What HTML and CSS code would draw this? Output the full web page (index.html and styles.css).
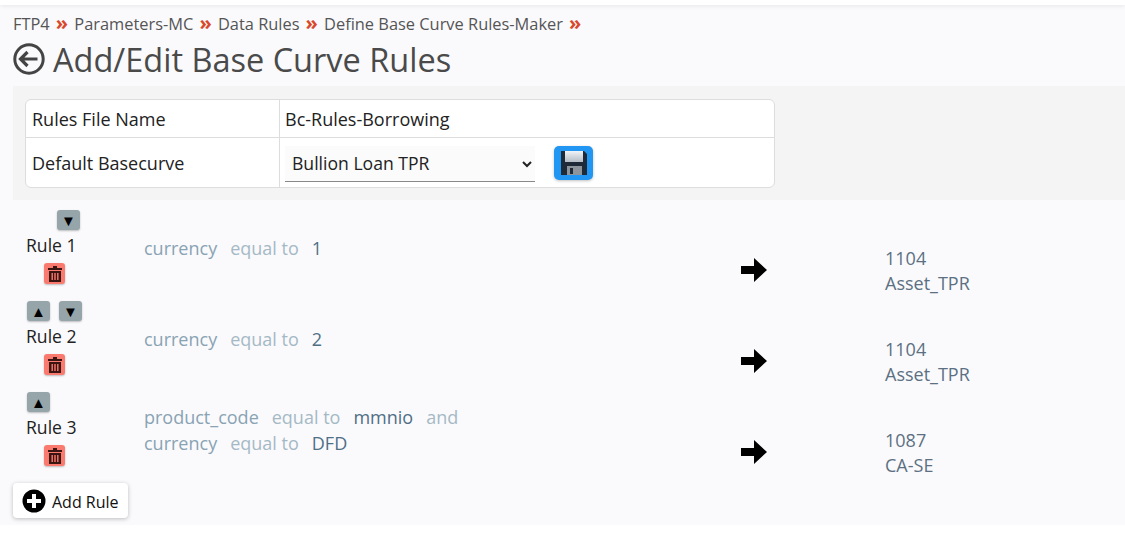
FILE: index.html
```html
<!DOCTYPE html>
<html lang="en">
<head>
    <meta charset="UTF-8">
    <title>Add/Edit Base Curve Rules</title>
    <link rel="stylesheet" href="styles.css">
</head>
<body>
    <div class="top-strip"></div>
    <div class="page">
        <div class="breadcrumb">
            <span>FTP4</span><b>»</b>
            <span>Parameters-MC</span><b>»</b>
            <span>Data Rules</span><b>»</b>
            <span>Define Base Curve Rules-Maker</span><b>»</b>
        </div>

        <div class="title-row">
            <svg class="back-icon" viewBox="0 0 32 32" width="32" height="32">
                <circle cx="16" cy="16" r="14.2" fill="none" stroke="#444" stroke-width="3"/>
                <path d="M7.5 16h17M14.5 9l-7 7 7 7" fill="none" stroke="#444" stroke-width="3.2"/>
            </svg>
            <h1>Add/Edit Base Curve Rules</h1>
        </div>

        <div class="file-panel">
            <div class="file-table">
                <div class="file-row">
                    <div class="file-label">Rules File Name</div>
                    <div class="file-value">Bc-Rules-Borrowing</div>
                </div>
                <div class="file-row">
                    <div class="file-label">Default Basecurve</div>
                    <div class="file-value">
                        <select class="curve-select">
                            <option>Bullion Loan TPR</option>
                        </select>
                        <button class="save-button" aria-label="Save">
                            <svg viewBox="0 0 28 26" width="28" height="26">
                                <defs>
                                    <linearGradient id="saveLabel" x1="0" y1="0" x2="0" y2="1">
                                        <stop offset="0" stop-color="#f2f4f7"/>
                                        <stop offset="1" stop-color="#b4bcc6"/>
                                    </linearGradient>
                                </defs>
                                <path d="M1 1h23l3 3v21H1z" fill="#1f2a38"/>
                                <rect x="5" y="1" width="18" height="11" fill="url(#saveLabel)"/>
                                <rect x="7" y="16" width="15" height="9" fill="#8d949c"/>
                                <rect x="10" y="18" width="3" height="6" fill="#1f2a38"/>
                            </svg>
                        </button>
                    </div>
                </div>
            </div>
        </div>

        <div class="rules">
            <div class="rule">
                <div class="rule-side">
                    <div class="moves only-down">
                        <button class="move-button">▼</button>
                    </div>
                    <div class="rule-name">Rule 1</div>
                    <button class="trash-button" aria-label="Delete">
                        <svg viewBox="0 0 14 16" width="14" height="16"><path d="M5 0h4v2h5v2H0V2h5zM1 5h12v11H1zM3.5 7v7h1.4V7zM6.3 7v7h1.4V7zM9.100 7v7h1.400V7z" fill="#3a1512" fill-rule="evenodd"/></svg>
                    </button>
                </div>
                <div class="rule-cond">
                    <div><span class="field">currency</span><span class="op">equal to</span><span class="val">1</span></div>
                </div>
                <div class="rule-target">
                    <svg class="arrow-icon" viewBox="0 0 26 24" width="26" height="24"><path d="M0 8h13V0l13 12-13 12v-8H0z" fill="#000"/></svg>
                    <div class="target-text">1104<br>Asset_TPR</div>
                </div>
            </div>

            <div class="rule">
                <div class="rule-side">
                    <div class="moves">
                        <button class="move-button">▲</button>
                        <button class="move-button">▼</button>
                    </div>
                    <div class="rule-name">Rule 2</div>
                    <button class="trash-button" aria-label="Delete">
                        <svg viewBox="0 0 14 16" width="14" height="16"><path d="M5 0h4v2h5v2H0V2h5zM1 5h12v11H1zM3.5 7v7h1.4V7zM6.3 7v7h1.4V7zM9.100 7v7h1.400V7z" fill="#3a1512" fill-rule="evenodd"/></svg>
                    </button>
                </div>
                <div class="rule-cond">
                    <div><span class="field">currency</span><span class="op">equal to</span><span class="val">2</span></div>
                </div>
                <div class="rule-target">
                    <svg class="arrow-icon" viewBox="0 0 26 24" width="26" height="24"><path d="M0 8h13V0l13 12-13 12v-8H0z" fill="#000"/></svg>
                    <div class="target-text">1104<br>Asset_TPR</div>
                </div>
            </div>

            <div class="rule">
                <div class="rule-side">
                    <div class="moves">
                        <button class="move-button">▲</button>
                    </div>
                    <div class="rule-name">Rule 3</div>
                    <button class="trash-button" aria-label="Delete">
                        <svg viewBox="0 0 14 16" width="14" height="16"><path d="M5 0h4v2h5v2H0V2h5zM1 5h12v11H1zM3.5 7v7h1.4V7zM6.3 7v7h1.4V7zM9.100 7v7h1.400V7z" fill="#3a1512" fill-rule="evenodd"/></svg>
                    </button>
                </div>
                <div class="rule-cond">
                    <div><span class="field">product_code</span><span class="op">equal to</span><span class="val">mmnio</span><span class="op">and</span></div>
                    <div><span class="field">currency</span><span class="op">equal to</span><span class="val">DFD</span></div>
                </div>
                <div class="rule-target">
                    <svg class="arrow-icon" viewBox="0 0 26 24" width="26" height="24"><path d="M0 8h13V0l13 12-13 12v-8H0z" fill="#000"/></svg>
                    <div class="target-text">1087<br>CA-SE</div>
                </div>
            </div>
        </div>

        <button class="add-button">
            <svg viewBox="0 0 24 24" width="24" height="24">
                <circle cx="12" cy="12" r="11.500" fill="#000"/>
                <path d="M10 5h4v5h5v4h-5v5h-4v-5H5v-4h5z" fill="#fff"/>
            </svg>
            <span class="add-label">Add Rule</span>
        </button>
    </div>
</body>
</html>
```

FILE: styles.css
```css
* {
    box-sizing: border-box;
}
body {
    margin: 0;
    background-color: #fff;
    font-family: "Open Sans", "Liberation Sans", sans-serif;
    font-size: 18px;
    color: #222;
    overflow: hidden;
}
button {
    font-family: inherit;
    border: none;
    cursor: pointer;
}
.top-strip {
    height: 5px;
    background-color: #fff;
    box-shadow: 0 1px 4px rgba(0, 0, 0, 0.08);
    position: relative;
}
.page {
    height: 520px;
    padding: 6px 0 0 13px;
    background-color: #fafafd;
}
.breadcrumb {
    height: 24px;
    font-size: 16.4px;
    line-height: 24px;
    color: #555;
    white-space: nowrap;
}
.breadcrumb b {
    margin: 0 2px 0 6px;
    color: #d9482b;
    font-size: 20px;
}
.title-row {
    display: flex;
    align-items: center;
    gap: 8px;
    height: 44px;
    margin-top: 2px;
}
.title-row h1 {
    margin: 0;
    font-size: 32.5px;
    font-weight: 400;
    color: #4a4a4a;
}
.file-panel {
    margin-top: 5px;
    padding: 13px 12px 12px;
    height: 114px;
    background-color: #f4f4f4;
}
.file-table {
    width: 750px;
    height: 89px;
    background-color: #fff;
    border: 1px solid #ddd;
    border-radius: 6px;
}
.file-row {
    display: flex;
    height: 38px;
    border-bottom: 1px solid #ddd;
}
.file-row:last-child {
    height: 49px;
    border-bottom: none;
}
.file-label {
    display: flex;
    align-items: center;
    width: 254px;
    padding-left: 6px;
    border-right: 1px solid #ddd;
}
.file-value {
    display: flex;
    align-items: center;
    padding-left: 5px;
    flex: 1;
}
.curve-select {
    width: 250px;
    height: 36px;
    margin-top: 2px;
    padding: 0 3px;
    font-family: inherit;
    font-size: 17.6px;
    color: #222;
    background-color: #fbfbfb;
    border: none;
    border-bottom: 1px solid #888;
    border-radius: 0;
}
.save-button {
    display: flex;
    align-items: center;
    justify-content: center;
    width: 39px;
    height: 34px;
    margin-left: 19px;
    padding: 0;
    background-color: #2196f3;
    border-radius: 5px;
    box-shadow: 0 1px 3px rgba(0, 0, 0, 0.25);
}
.rules {
    margin-top: 9px;
}
.rule {
    display: flex;
    height: 91px;
}
.rule-side {
    width: 131px;
    padding-top: 1px;
}
.moves {
    display: flex;
    gap: 9px;
    height: 20px;
    padding-left: 14px;
}
.moves.only-down {
    padding-left: 44px;
}
.move-button {
    width: 23px;
    height: 20px;
    padding: 0;
    font-size: 15px;
    line-height: 20px;
    color: #000;
    background-color: #96a5aa;
    border-radius: 3px;
    box-shadow: 0 1px 2px rgba(0, 0, 0, 0.25);
}
.rule-name {
    height: 24px;
    margin-top: 3px;
    padding-left: 13px;
    font-size: 17.6px;
    line-height: 24px;
}
.trash-button {
    display: flex;
    align-items: center;
    justify-content: center;
    width: 21px;
    height: 21px;
    margin: 6px 0 0 31px;
    padding: 0;
    background-color: #fb7a6f;
    border-radius: 3px;
    box-shadow: 0 1px 2px rgba(0, 0, 0, 0.25);
}
.rule-cond {
    align-self: center;
    width: 597px;
    padding-bottom: 14px;
    line-height: 26px;
}
.field {
    margin-right: 13px;
    color: #89a3b3;
}
.op {
    margin-right: 13px;
    color: #a5b9c5;
}
.val {
    margin-right: 13px;
    color: #4f6f85;
}
.rule-target {
    display: flex;
    align-items: center;
    padding-top: 31px;
}
.arrow-icon {
    margin-right: 118px;
}
.target-text {
    margin-top: 2px;
    line-height: 25px;
    color: #5c7082;
}
.add-button {
    display: flex;
    align-items: center;
    gap: 6px;
    width: 115px;
    height: 35px;
    margin-top: 1px;
    padding: 0 0 0 9px;
    font-size: 16px;
    color: #111;
    background-color: #fff;
    border-radius: 4px;
    box-shadow: 0 1px 4px rgba(0, 0, 0, 0.25);
}
.add-label {
    margin-top: 2px;
}
```
